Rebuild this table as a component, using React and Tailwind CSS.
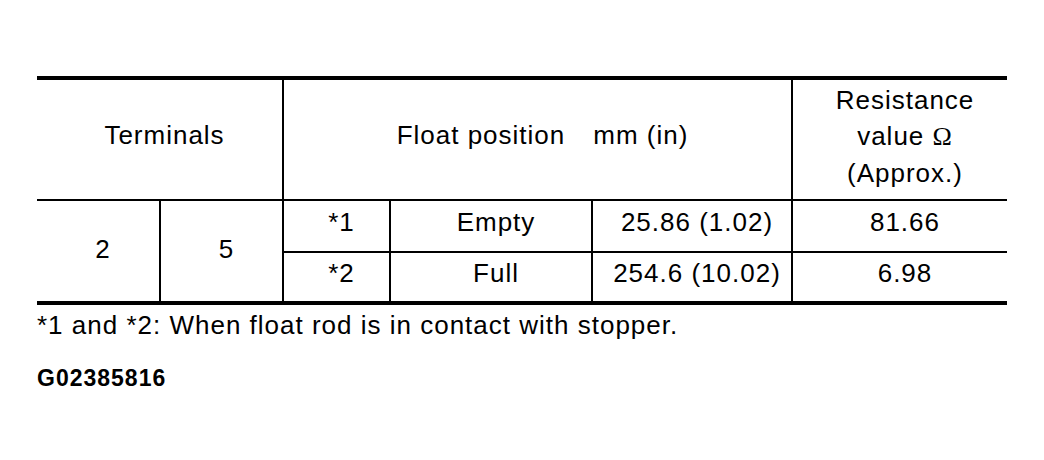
export default function App() {
  const cell = "bg-white flex items-center justify-center pl-[10px]";
  return (
    <div className="min-h-screen w-[1044px] bg-white pt-[76px] pl-[37px] font-['Liberation_Sans',Arial,sans-serif] text-black text-[26px] tracking-[1px] leading-[30px]">
      <div className="w-[970px] border-y-4 border-black bg-black grid grid-cols-[122px_121px_105px_200px_198px_214px] grid-rows-[119px_50px_48px] gap-[2px]">
        <div className={`${cell} col-span-2 pb-[10px]`}>Terminals</div>
        <div className={`${cell} col-span-3 pb-[10px]`}>
          <span>Float position</span>
          <span className="ml-[28px]">mm (in)</span>
        </div>
        <div className={`${cell} flex-col leading-[36px] pb-[7px] text-center`}>
          <span>Resistance</span>
          <span>
            value <span className="font-['Liberation_Serif',serif]">Ω</span>
          </span>
          <span>(Approx.)</span>
        </div>
        <div className={`${cell} row-span-2 pb-[5px]`}>2</div>
        <div className={`${cell} row-span-2 pb-[5px]`}>5</div>
        <div className={`${cell} pb-[8px]`}>*1</div>
        <div className={`${cell} pb-[8px]`}>Empty</div>
        <div className={`${cell} pb-[8px]`}>25.86 (1.02)</div>
        <div className={`${cell} pb-[8px]`}>81.66</div>
        <div className={`${cell} pb-[8px]`}>*2</div>
        <div className={`${cell} pb-[8px]`}>Full</div>
        <div className={`${cell} pb-[8px]`}>254.6 (10.02)</div>
        <div className={`${cell} pb-[8px]`}>6.98</div>
      </div>
      <p className="mt-[5px]">*1 and *2: When float rod is in contact with stopper.</p>
      <p className="mt-[25px] text-[23px] leading-[26px] font-bold tracking-[1px]">G02385816</p>
    </div>
  );
}
